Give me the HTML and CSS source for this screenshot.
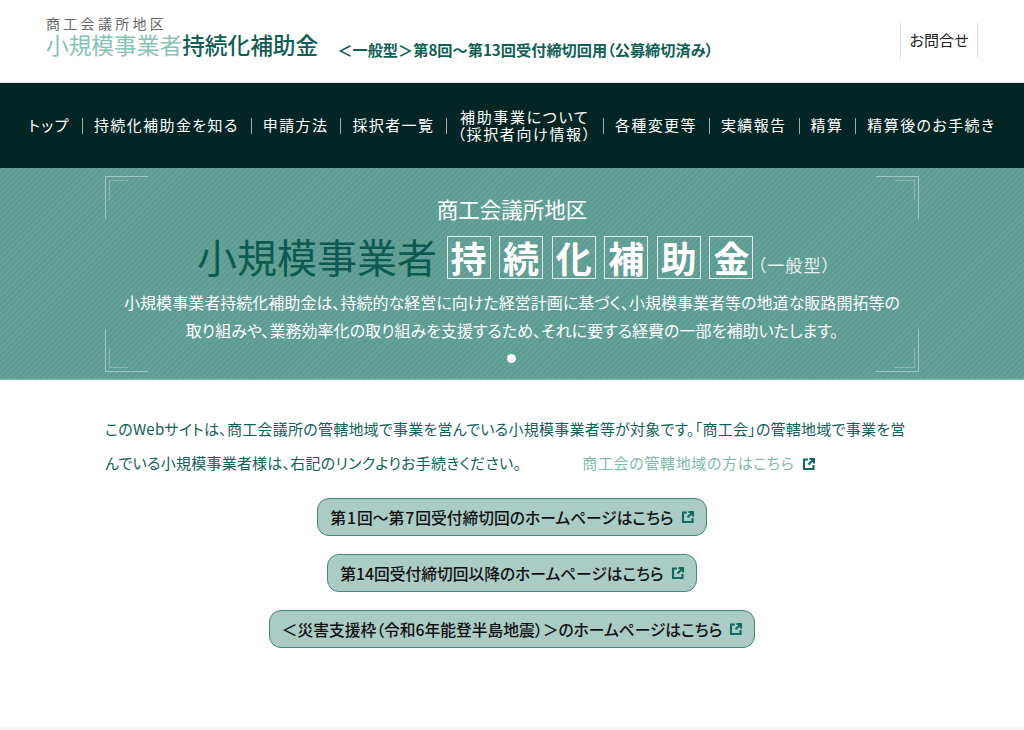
FILE: index.html
```html
<!DOCTYPE html>
<html lang="ja">
<head>
<meta charset="utf-8">
<title>小規模事業者持続化補助金</title>
<link rel="stylesheet" href="styles.css">
</head>
<body>
<header class="header">
  <div class="logo">
    <div class="logo-sub">商工会議所地区</div>
    <div class="logo-main"><span class="light">小規模事業者</span>持続化補助金</div>
  </div>
  <div class="header-note">＜一般型＞第8回～第13回受付締切回用（公募締切済み）</div>
  <a class="contact">お問合せ</a>
</header>
<nav class="nav">
  <a>トップ</a><a>持続化補助金を知る</a><a>申請方法</a><a>採択者一覧</a><a class="two">補助事業について<br>（採択者向け情報）</a><a>各種変更等</a><a>実績報告</a><a>精算</a><a>精算後のお手続き</a>
</nav>
<section class="hero">
  <svg class="corner tl" width="44" height="44" viewBox="0 0 44 44"><path d="M.5 43V.5H43"/><path class="inner" d="M4.500 24V4.500H23"/></svg>
  <svg class="corner tr" width="44" height="44" viewBox="0 0 44 44"><path d="M43.500 43V.5H1"/><path class="inner" d="M39.500 24V4.500H19"/></svg>
  <svg class="corner bl" width="44" height="44" viewBox="0 0 44 44"><path d="M.5 1V43.500H43"/><path class="inner" d="M4.500 20V39.500H23"/></svg>
  <svg class="corner br" width="44" height="44" viewBox="0 0 44 44"><path d="M43.500 1V43.500H1"/><path class="inner" d="M39.500 20V39.500H19"/></svg>
  <p class="hero-sub">商工会議所地区</p>
  <div class="hero-title">
    <span class="hero-dark">小規模事業者</span>
    <span class="boxes"><b>持</b><b>続</b><b>化</b><b>補</b><b>助</b><b>金</b></span>
    <span class="hero-type">（一般型）</span>
  </div>
  <p class="hero-text">小規模事業者持続化補助金は、持続的な経営に向けた経営計画に基づく、小規模事業者等の地道な販路開拓等の<br>取り組みや、業務効率化の取り組みを支援するため、それに要する経費の一部を補助いたします。</p>
  <span class="dot"></span>
</section>
<main class="main">
  <p class="intro">このWebサイトは、商工会議所の管轄地域で事業を営んでいる小規模事業者等が対象です。「商工会」の管轄地域で事業を営<br>んでいる小規模事業者様は、右記のリンクよりお手続きください。<a class="intro-link">商工会の管轄地域の方はこちら<svg class="ext" viewBox="0 0 14 14"><path d="M6 2.500H2V12h9.500V8M7.500 2H12v4.500M12 2L6.500 7.500"/></svg></a></p>
  <div class="buttons">
    <a class="btn">第<span class="num">1</span>回～第<span class="num">7</span>回受付締切回のホームページはこちら<svg class="ext" viewBox="0 0 14 14"><path d="M6 2.500H2V12h9.500V8M7.500 2H12v4.500M12 2L6.500 7.500"/></svg></a>
    <a class="btn">第14回受付締切回以降のホームページはこちら<svg class="ext" viewBox="0 0 14 14"><path d="M6 2.500H2V12h9.500V8M7.500 2H12v4.500M12 2L6.500 7.500"/></svg></a>
    <a class="btn">＜災害支援枠（令和6年能登半島地震）＞のホームページはこちら<svg class="ext" viewBox="0 0 14 14"><path d="M6 2.500H2V12h9.500V8M7.500 2H12v4.500M12 2L6.500 7.500"/></svg></a>
  </div>
</main>
<div class="foot"></div>
</body>
</html>
```
FILE: styles.css
```css
* { box-sizing: border-box; }
html, body { margin: 0; padding: 0; }
body {
  width: 1024px;
  height: 730px;
  overflow: hidden;
  background: #fff;
  font-family: "Noto Sans CJK JP", "Noto Sans", sans-serif;
  font-feature-settings: "palt";
  color: #000;
  display: flex;
  flex-direction: column;
}
p { margin: 0; }
.header {
  height: 83px;
  flex: none;
  border-bottom: 1px solid #dfe5e3;
  display: flex;
  align-items: flex-start;
  padding: 14px 46px 0 46px;
}
.logo-sub { font-size: 14px; line-height: 18px; letter-spacing: 3.300px; color: #666; }
.logo-main { font-size: 22.700px; line-height: 26px; color: #0f5f55; font-weight: 500; }
.light { color: #86c4b5; font-weight: 400; }
.header-note {
  margin: 24px 0 0 19px;
  font-size: 15.200px;
  line-height: 22px;
  font-weight: 700;
  color: #0f5f55;
  white-space: nowrap;
}
.contact {
  margin: 9px 0 0 auto;
  height: 36px;
  width: 78px;
  border-left: 1px solid #d5e2df;
  border-right: 1px solid #d5e2df;
  font-size: 15px;
  line-height: 33px;
  text-align: center;
  color: #222;
}
.nav {
  flex: none;
  height: 85px;
  padding-bottom: 2px;
  background: #032624;
  color: #fff;
  display: flex;
  justify-content: center;
  align-items: center;
  font-size: 15px;
  line-height: 17px;
  letter-spacing: 1.400px;
}
.nav a { padding: 0 12px; position: relative; white-space: nowrap; text-align: center; }
.nav a.two { padding: 0 11px; letter-spacing: 1.650px; }
.nav a + a::before {
  content: "";
  position: absolute;
  left: 0;
  top: 50%;
  height: 16px;
  margin-top: -7px;
  border-left: 1px solid #9db0ad;
}
.hero {
  flex: none;
  height: 212px;
  position: relative;
  color: #fff;
  text-align: center;
  background: repeating-linear-gradient(135deg, #5d9b91 0 2px, #65a298 2px 4px);
  border-bottom: 1px solid #8cbbb3;
  padding-top: 27px;
}
.corner { position: absolute; fill: none; stroke: rgba(255, 255, 255, 0.4); stroke-width: 1; }
.corner .inner { stroke: rgba(255, 255, 255, 0.25); }
.tl { left: 105px; top: 8px; }
.tr { right: 105px; top: 8px; }
.bl { left: 105px; bottom: 7px; }
.br { right: 105px; bottom: 7px; }
.hero-sub { font-size: 21.500px; line-height: 28px; }
.hero-title {
  display: flex;
  justify-content: flex-start;
  align-items: flex-end;
  height: 43px;
  margin: 13px 0 0 197px;
}
.hero-dark { font-size: 40px; line-height: 42px; padding-bottom: 2px; color: #0c5a50; width: 249.500px; text-align: left; white-space: nowrap; font-weight: 400; }
.boxes { display: flex; gap: 8.600px; }
.boxes b {
  width: 44px;
  height: 43px;
  border: 1px solid #dcebe8;
  font-size: 36px;
  line-height: 40px;
  font-weight: 700;
}
.hero-type { font-size: 17px; line-height: 28px; letter-spacing: 1.200px; white-space: nowrap; padding-left: 4px; color: #e6f1ef; }
.hero-text { margin-top: 9px; font-size: 16px; line-height: 28px; letter-spacing: 0.030px; }
.dot {
  position: absolute;
  left: 507px;
  top: 186px;
  width: 9px;
  height: 9px;
  border-radius: 50%;
  background: #fff;
}
.main { flex: 1; padding: 32px 105px 0; }
.intro { font-size: 15px; line-height: 34px; letter-spacing: 0.240px; color: #0f6258; height: 68px; white-space: nowrap; }
.intro-link { color: #7dbbac; margin-left: 61px; letter-spacing: 0.650px; }
.ext { width: 14px; height: 14px; fill: none; stroke: #0f6a60; stroke-width: 2.100; margin-left: 7px; vertical-align: -2px; }
.buttons { display: flex; flex-direction: column; align-items: center; gap: 18px; margin-top: 18px; }
.btn {
  height: 38px;
  display: flex;
  align-items: center;
  justify-content: center;
  padding: 0 11px 0 12px;
  background: #abcbc5;
  border: 1px solid #3f8a80;
  border-radius: 12px;
  font-size: 15.750px;
  font-weight: 500;
  color: #111;
  white-space: pre;
}
.num { padding: 0 1px; }
.foot { flex: none; height: 3px; background: #f1f5f4; }
```
